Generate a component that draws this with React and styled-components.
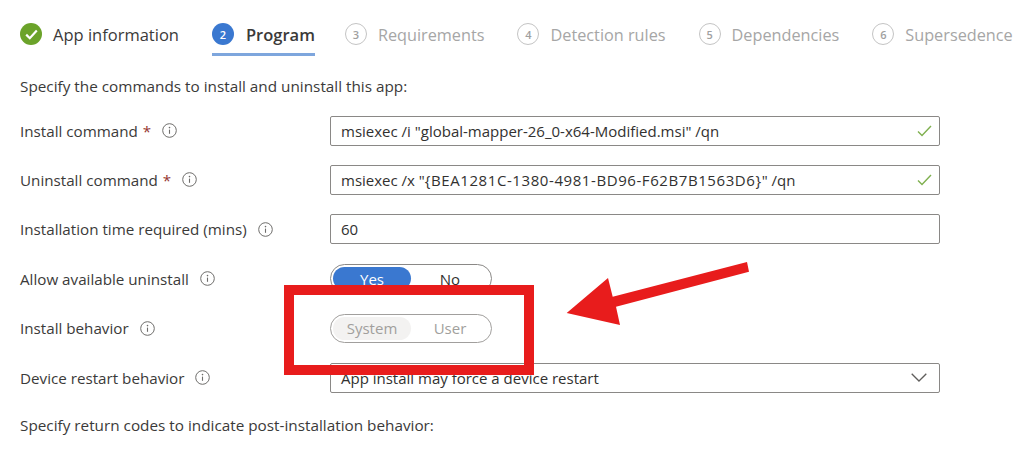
import React from "react"
import styled, { createGlobalStyle } from "styled-components"

const GlobalStyle = createGlobalStyle`
  html, body {
    margin: 0;
    background: #fff;
  }
`

const Page = styled.div`
  position: relative;
  width: 1022px;
  height: 457px;
  overflow: hidden;
  padding: 23px 0 0 20px;
  box-sizing: border-box;
  font-family: "Open Sans", "Noto Sans", sans-serif;
  font-size: 15.2px;
  color: #3b3a39;
  background: #fff;
`

const Steps = styled.div`
  display: flex;
  gap: 33px;
  height: 33px;
  white-space: nowrap;
`

const Step = styled.div`
  display: flex;
  align-items: flex-start;
  gap: ${(p) => (p.$active ? "12px" : "11px")};
  height: 33px;
  box-sizing: border-box;
  margin-right: ${(p) => (p.$active ? "-3px" : "0")};
  border-bottom: ${(p) => (p.$active ? "3px solid #7ea6dd" : "0")};
  color: ${(p) => (p.$disabled ? "#a6a6a6" : "#3b3a39")};
  font-size: ${(p) => (p.$disabled ? "16.25px" : "16.5px")};
  line-height: 24px;
  font-weight: ${(p) => (p.$active ? 600 : 400)};
`

const StepBadge = styled.span`
  flex: none;
  display: flex;
  align-items: center;
  justify-content: center;
  width: 22px;
  height: 22px;
  box-sizing: border-box;
  border-radius: 50%;
  font-size: 11px;
  line-height: 1;
  font-weight: 600;
  color: ${(p) => (p.$active ? "#fff" : "#a0a0a0")};
  background: ${(p) => (p.$active ? "#3a78d0" : p.$done ? "#6ba32a" : "#fff")};
  border: ${(p) => (p.$active || p.$done ? "0" : "1.5px solid #c4c4c4")};
`

const Note = styled.p`
  margin: ${(p) => p.$top}px 0 0;
  font-size: 15.3px;
  line-height: 20px;
`

const Form = styled.div`
  display: flex;
  flex-direction: column;
  gap: 19.4px;
  margin-top: 19.6px;
`

const Row = styled.div`
  display: grid;
  grid-template-columns: 310px 610px;
  align-items: center;
  height: 30px;
`

const Label = styled.div`
  display: flex;
  align-items: center;
  gap: 11px;
  white-space: nowrap;
`

const Required = styled.span`
  color: #96352f;
  margin-left: 5px;
`

const Field = styled.div`
  display: flex;
  align-items: center;
  justify-content: space-between;
  height: 30px;
  padding: 0 7px 0 10px;
  box-sizing: border-box;
  border: 1px solid #8a8886;
  border-radius: 2px;
  background: #fff;
  white-space: nowrap;
  font-size: 15px;
  color: #323130;
`

const Guid = styled.span`
  letter-spacing: 0.58px;
`

const Toggle = styled.div`
  display: flex;
  width: 162px;
  height: 29px;
  padding: 2px;
  box-sizing: border-box;
  border: 1px solid ${(p) => (p.$disabled ? "#a19f9d" : "#8a8886")};
  border-radius: 15px;
  background: #fff;
  font-size: 15px;
`

const ToggleOption = styled.div`
  display: flex;
  align-items: center;
  justify-content: center;
  width: 78px;
  border-radius: 12px;
  color: ${(p) => {
    if (p.$disabled) return "#a19f9d"
    return p.$selected ? "#fff" : "#323130"
  }};
  background: ${(p) => {
    if (!p.$selected) return "transparent"
    return p.$disabled ? "#f3f2f1" : "#3a78d0"
  }};
`

const Callout = styled.div`
  position: absolute;
  left: 284px;
  top: 285px;
  width: 250px;
  height: 90px;
  box-sizing: border-box;
  border: 10px solid #e81c1c;
`

const Arrow = styled.svg`
  position: absolute;
  left: 560px;
  top: 255px;
`

const Chevron = styled.svg`
  margin-right: 5px;
`

const InfoIcon = () => (
  <svg width="15" height="15" viewBox="0 0 15 15" fill="none">
    <circle cx="7.5" cy="7.5" r="6.8" stroke="#6e6d6b" strokeWidth="1" />
    <path d="M7.5 6.6v4.2" stroke="#6e6d6b" strokeWidth="1.1" />
    <circle cx="7.5" cy="4.6" r="0.8" fill="#6e6d6b" />
  </svg>
)

const CheckIcon = () => (
  <svg width="15" height="12" viewBox="0 0 15 12" fill="none">
    <path d="M1 6.5 5 10.5 14 1" stroke="#7fb04f" strokeWidth="1.4" />
  </svg>
)

const ChevronIcon = () => (
  <Chevron width="16" height="9" viewBox="0 0 16 9" fill="none">
    <path d="M.7.7 8 8 15.3.7" stroke="#605e5c" strokeWidth="1.3" />
  </Chevron>
)

const steps = [
  { n: 2, label: "Program", active: true },
  { n: 3, label: "Requirements" },
  { n: 4, label: "Detection rules" },
  { n: 5, label: "Dependencies" },
  { n: 6, label: "Supersedence" },
]

const FormLabel = ({ children, required }) => (
  <Label>
    <span>
      {children}
      {required && <Required>*</Required>}
    </span>
    <InfoIcon />
  </Label>
)

export default function App() {
  return (
    <Page>
      <GlobalStyle />
      <Steps>
        <Step>
          <StepBadge $done>
            <svg width="13" height="11" viewBox="0 0 13 11" fill="none">
              <path d="M1.2 5.6 4.8 9.2 11.8 1.6" stroke="#fff" strokeWidth="2.2" />
            </svg>
          </StepBadge>
          App information
        </Step>
        {steps.map((s) => (
          <Step key={s.n} $active={s.active} $disabled={!s.active}>
            <StepBadge $active={s.active}>{s.n}</StepBadge>
            {s.label}
          </Step>
        ))}
      </Steps>

      <Note $top={20}>Specify the commands to install and uninstall this app:</Note>

      <Form>
        <Row>
          <FormLabel required>Install command</FormLabel>
          <Field>
            msiexec /i "global-mapper-26_0-x64-Modified.msi" /qn
            <CheckIcon />
          </Field>
        </Row>
        <Row>
          <FormLabel required>Uninstall command</FormLabel>
          <Field>
            <span>
              msiexec /x "<Guid>{"{BEA1281C-1380-4981-BD96-F62B7B1563D6}"}</Guid>" /qn
            </span>
            <CheckIcon />
          </Field>
        </Row>
        <Row>
          <FormLabel>Installation time required (mins)</FormLabel>
          <Field>60</Field>
        </Row>
        <Row>
          <FormLabel>Allow available uninstall</FormLabel>
          <Toggle>
            <ToggleOption $selected>Yes</ToggleOption>
            <ToggleOption>No</ToggleOption>
          </Toggle>
        </Row>
        <Row>
          <FormLabel>Install behavior</FormLabel>
          <Toggle $disabled>
            <ToggleOption $selected $disabled>System</ToggleOption>
            <ToggleOption $disabled>User</ToggleOption>
          </Toggle>
        </Row>
        <Row>
          <FormLabel>Device restart behavior</FormLabel>
          <Field>
            App install may force a device restart
            <ChevronIcon />
          </Field>
        </Row>
      </Form>

      <Note $top={22}>Specify return codes to indicate post-installation behavior:</Note>

      <Callout />
      <Arrow width="200" height="80" viewBox="0 0 200 80" fill="none">
        <path
          d="M6.7 58 48 23 52.7 41.7 187 7 189 16.7 56 51.7 60 70Z"
          fill="#e81c1c"
        />
      </Arrow>
    </Page>
  )
}
